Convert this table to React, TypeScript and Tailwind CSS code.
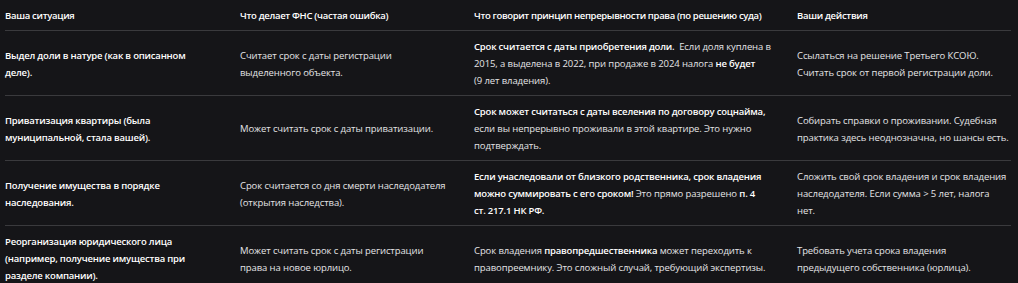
import React from 'react';

type Row = {
  situation: string;
  fns: string;
  principle: React.ReactNode;
  action: string[];
};

const B: React.FC<{ children: React.ReactNode }> = ({ children }) => (
  <b className="font-semibold text-white tracking-[-0.2px]">{children}</b>
);

const rows: Row[] = [
  {
    situation: 'Выдел доли в натуре (как в описанном деле).',
    fns: 'Считает срок с даты регистрации выделенного объекта.',
    principle: (
      <>
        <B>Срок считается с даты приобретения доли.</B>&nbsp; Если доля куплена в 2015, а выделена в 2022, при
        продаже в 2024 налога <B>не будет</B> (9&nbsp;лет&nbsp;владения).
      </>
    ),
    action: ['Ссылаться на решение Третьего КСОЮ.', 'Считать срок от первой регистрации доли.'],
  },
  {
    situation: 'Приватизация квартиры (была муниципальной, стала вашей).',
    fns: 'Может считать срок с даты приватизации.',
    principle: (
      <>
        <B>Срок может считаться с даты вселения по договору соцнайма,</B> если вы непрерывно проживали в этой
        квартире. Это нужно подтверждать.
      </>
    ),
    action: ['Собирать справки о проживании. Судебная', 'практика здесь неоднозначна, но шансы есть.'],
  },
  {
    situation: 'Получение имущества в порядке наследования.',
    fns: 'Срок считается со дня смерти наследодателя (открытия наследства).',
    principle: (
      <>
        <B>Если унаследовали от близкого родственника, срок владения можно суммировать с его сроком!</B> Это
        прямо разрешено <B>п.&nbsp;4 ст.&nbsp;217.1 НК РФ.</B>
      </>
    ),
    action: ['Сложить свой срок владения и срок владения', 'наследодателя. Если сумма > 5 лет, налога', 'нет.'],
  },
  {
    situation: 'Реорганизация юридического лица (например, получение имущества при разделе компании).',
    fns: 'Может считать срок с даты регистрации права на новое юрлицо.',
    principle: (
      <>
        Срок владения <B>правопредшественника</B> может переходить к правопреемнику. Это сложный случай,
        требующий экспертизы.
      </>
    ),
    action: ['Требовать учета срока владения', 'предыдущего собственника (юрлица).'],
  },
];

const App: React.FC = () => {
  return (
    <div
      className="min-h-screen w-full bg-[#151518] text-[#e4e4e6] pl-[5px] overflow-hidden"
      style={{ fontFamily: '"Open Sans", "Noto Sans", sans-serif' }}
    >
      <table className="w-[1006px] table-fixed border-collapse text-[9.5px] leading-[17px] tracking-[-0.1px]">
        <colgroup>
          <col className="w-[235px]" />
          <col className="w-[234px]" />
          <col className="w-[323px]" />
          <col className="w-[214px]" />
        </colgroup>
        <thead>
          <tr className="border-b border-[#3a3a3d] text-left text-white">
            <th className="pt-[7px] pb-[6px] pr-4 font-semibold tracking-[-0.3px]">Ваша ситуация</th>
            <th className="pt-[7px] pb-[6px] pr-4 font-semibold tracking-[-0.3px]">
              Что делает ФНС (частая ошибка)
            </th>
            <th className="pt-[7px] pb-[6px] font-semibold tracking-[-0.35px] whitespace-nowrap">
              Что говорит принцип непрерывности права (по решению суда)
            </th>
            <th className="pt-[7px] pb-[6px] font-semibold tracking-[-0.3px]">Ваши действия</th>
          </tr>
        </thead>
        <tbody>
          {rows.map((r, i) => (
            <tr key={i} className={i < rows.length - 1 ? 'border-b border-[#3a3a3d]' : ''}>
              <td className="pt-[7px] pb-[6px] pr-[30px] align-middle font-semibold text-white tracking-[-0.2px]">
                {r.situation}
              </td>
              <td className="pt-[7px] pb-[6px] pr-[22px] align-middle">{r.fns}</td>
              <td className="pt-[7px] pb-[6px] pr-[14px] align-middle">{r.principle}</td>
              <td className="pt-[7px] pb-[6px] align-middle whitespace-nowrap">
                {r.action.map((line, j) => (
                  <div key={j}>{line}</div>
                ))}
              </td>
            </tr>
          ))}
        </tbody>
      </table>
    </div>
  );
};

export default App;
